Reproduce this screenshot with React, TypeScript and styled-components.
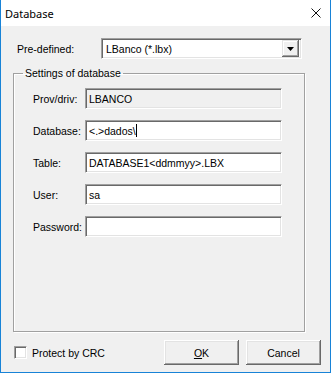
import React from 'react'
import styled, { createGlobalStyle } from 'styled-components'

const GlobalStyle = createGlobalStyle`
    html, body {
        margin: 0;
        padding: 0;
        background: #f0f0f0;
    }
    * {
        box-sizing: border-box;
    }
`

const rows = [
    { label: 'Prov/driv:', value: 'LBANCO', disabled: true },
    { label: 'Database:', value: '<.>dados\\', caret: true },
    { label: 'Table:', value: 'DATABASE1<ddmmyy>.LBX' },
    { label: 'User:', value: 'sa' },
    { label: 'Password:', value: '' },
]

const App = () => {
  return (
    <>
      <GlobalStyle />
      <Window>
        <TitleBar>
            <Title>Database</Title>
            <svg width="10" height="10" viewBox="0 0 10 10">
                <path d="M0.5 0.5 L9.5 9.5 M9.5 0.5 L0.5 9.5" stroke="#111" strokeWidth="1" fill="none" />
            </svg>
        </TitleBar>
        <Body>
            <PredefRow>
                <Label>Pre-defined:</Label>
                <Combo>
                    <ComboText>LBanco (*.lbx)</ComboText>
                    <DropButton>
                        <svg width="7" height="4" viewBox="0 0 7 4">
                            <path d="M0 0 H7 L3.5 4 Z" fill="#000" />
                        </svg>
                    </DropButton>
                </Combo>
            </PredefRow>
            <Group>
                <Legend>Settings of database</Legend>
                {rows.map((r) => (
                    <FieldRow key={r.label}>
                        <FieldLabel>{r.label}</FieldLabel>
                        <Field $disabled={r.disabled}>
                            {r.value}
                            {r.caret && <Caret />}
                        </Field>
                    </FieldRow>
                ))}
            </Group>
            <BottomRow>
                <CheckLabel>
                    <CheckBox />
                    Protect by CRC
                </CheckLabel>
                <Buttons>
                    <Button><u>O</u>K</Button>
                    <Button>Cancel</Button>
                </Buttons>
            </BottomRow>
        </Body>
      </Window>
    </>
  )
}

const Window = styled.div`
    width: 331px;
    height: 373px;
    border: 1px solid #1883d7;
    border-top: none;
    display: flex;
    flex-direction: column;
    background: #f0f0f0;
    font-family: "Liberation Sans", Arial, sans-serif;
    font-size: 10.5px;
    color: #000;
`

const TitleBar = styled.div`
    height: 26px;
    background: #fff;
    display: flex;
    align-items: center;
    justify-content: space-between;
    padding: 0 9px 0 4px;
`

const Title = styled.span`
    font-family: "Segoe UI", "Noto Sans", sans-serif;
    font-size: 11px;
    color: #000;
`

const Body = styled.div`
    flex: 1;
    display: flex;
    flex-direction: column;
    padding: 12px 0 0 12px;
`

const PredefRow = styled.div`
    display: flex;
    align-items: center;
    padding-left: 4px;
`

const Label = styled.span`
    width: 84px;
`

const sunken = `
    border: 1px solid;
    border-color: #a0a0a0 #fff #fff #a0a0a0;
    box-shadow: inset 1px 1px 0 #696969, inset -1px -1px 0 #e3e3e3;
`

const Combo = styled.div`
    ${sunken}
    width: 201px;
    height: 21px;
    background: #fff;
    display: flex;
    align-items: center;
    padding: 2px;
`

const ComboText = styled.span`
    flex: 1;
    padding-left: 2px;
`

const DropButton = styled.div`
    width: 17px;
    height: 17px;
    background: #f0f0f0;
    box-shadow: inset -1px -1px 0 #696969, inset 1px 1px 0 #e3e3e3, inset -2px -2px 0 #a0a0a0, inset 2px 2px 0 #fff;
    display: flex;
    align-items: center;
    justify-content: center;
`

const Group = styled.fieldset`
    margin: 8px 0 0 0;
    width: 292px;
    padding: 9px 0 94px 0;
    border: 1px solid #a0a0a0;
    box-shadow: 1px 1px 0 #fff, inset 1px 1px 0 #fff;
    display: flex;
    flex-direction: column;
    gap: 11px;
    min-width: 0;
`

const Legend = styled.legend`
    margin-left: 9px;
    padding: 0 2px;
    line-height: 12px;
`

const FieldRow = styled.div`
    display: flex;
    align-items: center;
    padding-left: 19px;
`

const FieldLabel = styled.span`
    width: 52px;
`

const Field = styled.div<{ $disabled?: boolean }>`
    ${sunken}
    width: 197px;
    height: 21px;
    background: ${(p) => (p.$disabled ? '#f0f0f0' : '#fff')};
    display: flex;
    align-items: center;
    padding-left: 3px;
    white-space: pre;
`

const Caret = styled.span`
    display: inline-block;
    width: 1px;
    height: 13px;
    background: #000;
`

const BottomRow = styled.div`
    display: flex;
    align-items: center;
    justify-content: space-between;
    margin-top: 8px;
    padding: 0 9px 0 1px;
`

const CheckLabel = styled.label`
    display: flex;
    align-items: center;
    gap: 5px;
`

const CheckBox = styled.span`
    ${sunken}
    width: 13px;
    height: 13px;
    background: #fff;
`

const Buttons = styled.div`
    display: flex;
    gap: 7px;
`

const Button = styled.button`
    width: 75px;
    height: 25px;
    background: #f0f0f0;
    border: none;
    box-shadow: inset -1px -1px 0 #696969, inset 1px 1px 0 #fff, inset -2px -2px 0 #a0a0a0, inset 2px 2px 0 #e3e3e3;
    font-family: "Liberation Sans", Arial, sans-serif;
    font-size: 10.5px;
    color: #000;
    padding: 0;
`

export default App
